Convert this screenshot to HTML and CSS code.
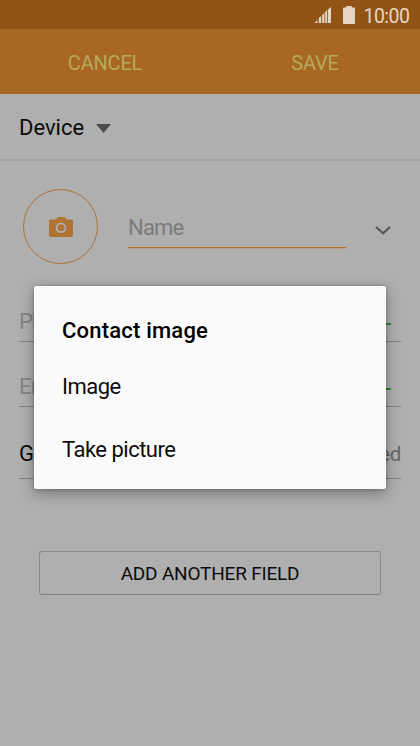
FILE: index.html
```html
<!DOCTYPE html>
<html lang="en">
<head>
  <meta charset="UTF-8" />
  <meta name="viewport" content="width=device-width, initial-scale=1.0"/>
  <title>Contacts</title>
  <link rel="stylesheet" href="styles.css">
</head>
<body>
  <div class="screen">
    <div class="status">
      <svg class="signal" width="16" height="16" viewBox="0 0 16 16">
        <path d="M0 16v-.6l2.400-2.400v3zM3.800 16v-5l2.400-2V16zM7.200 16V8l2.200-2V16zM10.200 16V5l2-2v13zM13 16V2.500l3-2.500v16z"/>
      </svg>
      <svg class="battery" width="12" height="18" viewBox="0 0 12 18">
        <path d="M3.200 0h5.600v1.600H11a1 1 0 0 1 1 1V17a1 1 0 0 1-1 1H1a1 1 0 0 1-1-1V2.600a1 1 0 0 1 1-1h2.200z"/>
      </svg>
      <span class="clock">10:00</span>
    </div>

    <div class="header">
      <span class="action">CANCEL</span>
      <span class="action">SAVE</span>
    </div>

    <div class="account">
      <span>Device</span>
      <svg class="caret" width="15" height="9" viewBox="0 0 15 9"><path d="M0 0h15L7.500 9z"/></svg>
    </div>

    <div class="name-row">
      <div class="photo">
        <svg width="24" height="20" viewBox="0 0 24 20">
          <path fill-rule="evenodd" d="M9 0h6.400l2.200 2.600H22.500a1.500 1.500 0 0 1 1.500 1.500V18a2 2 0 0 1-2 2H2a2 2 0 0 1-2-2V4.100a1.500 1.500 0 0 1 1.500-1.500h5.300zM12 5.500a5.300 5.300 0 1 0 0 10.600a5.300 5.300 0 0 0 0-10.600z"/>
          <circle cx="12" cy="10.800" r="3.500"/>
        </svg>
      </div>
      <div class="name-input">Name</div>
      <svg class="chevron" width="16" height="9" viewBox="0 0 16 9"><path d="M1 1l7 6.300L15 1"/></svg>
    </div>

    <div class="field phone">
      <span class="hint">Phone</span>
      <svg class="plus" width="18" height="18" viewBox="0 0 18 18"><path d="M0 9h18M9 0v18"/></svg>
    </div>
    <div class="field email">
      <span class="hint">Email</span>
      <svg class="plus" width="18" height="18" viewBox="0 0 18 18"><path d="M0 9h18M9 0v18"/></svg>
    </div>
    <div class="field groups">
      <span>Groups</span>
      <span class="value">Not assigned</span>
    </div>

    <div class="add-field">ADD ANOTHER FIELD</div>

    <div class="dialog">
      <div class="dialog-title">Contact image</div>
      <div class="dialog-item">Image</div>
      <div class="dialog-item">Take picture</div>
    </div>
  </div>
</body>
</html>
```

FILE: styles.css
```css
* {
  box-sizing: border-box;
}
body {
  margin: 0;
  background: #afafaf;
  color: #0c0c0c;
  font-family: Roboto, sans-serif;
  font-size: 22px;
}
svg {
  display: block;
  flex: none;
}
.screen {
  position: relative;
  height: 746px;
  overflow: hidden;
}
.status {
  display: flex;
  justify-content: flex-end;
  height: 29px;
  padding: 6px 10.5px 0 0;
  background: #915414;
  color: #e6d4c3;
  fill: #e6d4c3;
}
.signal {
  margin: 1px 12px 0 0;
}
.battery {
  margin-right: 8px;
}
.clock {
  font-size: 19.5px;
  letter-spacing: -0.5px;
  line-height: 21px;
}
.header {
  display: flex;
  height: 65px;
  background: #a86723;
  color: #b5aa5b;
}
.action {
  flex: 1;
  font-size: 20px;
  letter-spacing: -0.2px;
  line-height: 68px;
  text-align: center;
}
.account {
  display: flex;
  align-items: center;
  gap: 12px;
  height: 67px;
  padding: 2px 19px 0;
  border-bottom: 2px solid #a6a6a6;
  fill: #4b4b4b;
}
.caret {
  margin-top: 1px;
}
.name-row {
  display: flex;
  height: 75px;
  margin: 28px 0 0 23px;
}
.photo {
  display: flex;
  align-items: center;
  justify-content: center;
  width: 75px;
  height: 75px;
  border: 1px solid #b07332;
  border-radius: 50%;
  fill: #b07332;
}
.name-input {
  width: 218px;
  height: 59px;
  margin: 0 29px 0 30px;
  border-bottom: 1px solid #b0702a;
  box-shadow: 0 0.5px 0 #b0907a;
  color: #7b7b7b;
  letter-spacing: -0.8px;
  line-height: 78px;
}
.chevron {
  margin-top: 37px;
  fill: none;
  stroke: #575757;
  stroke-width: 2.2;
}
.field {
  display: flex;
  align-items: center;
  justify-content: space-between;
  margin: 0 19px;
  border-bottom: 1px solid #858585;
}
.phone {
  height: 41px;
  margin-top: 37px;
}
.email {
  height: 65px;
  padding-top: 24px;
}
.groups {
  height: 72px;
  padding-top: 22px;
}
.hint {
  color: #858585;
  letter-spacing: -0.8px;
}
.value {
  color: #666;
  font-size: 20.5px;
  letter-spacing: -0.3px;
}
.plus {
  margin: 5px 10px 0 0;
  stroke: #35803a;
  stroke-width: 2;
}
.add-field {
  height: 44px;
  margin: 72px 39px 0;
  border: 1px solid #8b8b8b;
  border-bottom-color: #808080;
  border-radius: 3px;
  font-size: 19px;
  letter-spacing: -0.2px;
  line-height: 44px;
  text-align: center;
}
.dialog {
  position: absolute;
  top: 286px;
  left: 34px;
  width: 352px;
  height: 203px;
  padding: 28px;
  border-radius: 2px;
  background: #fafafa;
  box-shadow: 0 4px 14px rgba(0, 0, 0, 0.35), 0 0 3px rgba(0, 0, 0, 0.25);
}
.dialog-title {
  height: 41px;
  color: #000;
  font-weight: 500;
  letter-spacing: 0.2px;
  line-height: 34px;
}
.dialog-item {
  height: 63px;
  letter-spacing: -0.5px;
  line-height: 64px;
}
```
